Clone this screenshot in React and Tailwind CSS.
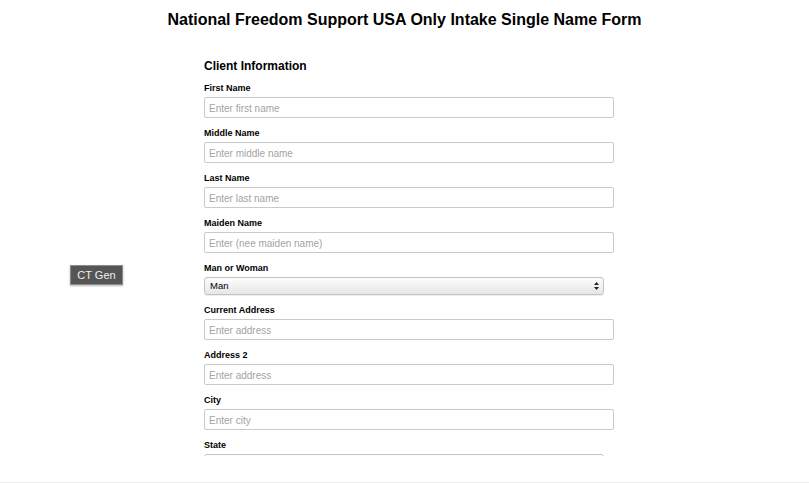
import React from "react";

const fields = [
  { label: "First Name", ph: "Enter first name" },
  { label: "Middle Name", ph: "Enter middle name" },
  { label: "Last Name", ph: "Enter last name" },
  { label: "Maiden Name", ph: "Enter (nee maiden name)" },
  { label: "Man or Woman", select: "Man" },
  { label: "Current Address", ph: "Enter address" },
  { label: "Address 2", ph: "Enter address" },
  { label: "City", ph: "Enter city" },
  { label: "State", select: "" },
];

function Arrows() {
  return (
    <svg width="5" height="8" viewBox="0 0 5 8" className="shrink-0">
      <path d="M2.5 0 L5 3 L0 3 Z" fill="#222" />
      <path d="M2.5 8 L5 5 L0 5 Z" fill="#222" />
    </svg>
  );
}

export default function App() {
  return (
    <div className="relative flex flex-col w-[809px] h-[483px] bg-white overflow-hidden" style={{ fontFamily: '"Liberation Sans", Arial, sans-serif' }}>
      <h1 className="pt-[10px] text-center text-[16px] leading-[20px] font-bold text-black">
        National Freedom Support USA Only Intake Single Name Form
      </h1>
      <div className="h-[406px] mt-[20px] overflow-hidden flex justify-start pl-[204px]">
        <div className="w-[410px] pt-[9px] flex flex-col gap-[10px]">
          <h2 className="text-[12px] leading-[14px] font-bold text-black">Client Information</h2>
          {fields.map((f) => (
            <div key={f.label} className="flex flex-col gap-[3px]">
              <div className="text-[9px] leading-[11px] font-bold text-black">{f.label}</div>
              {f.select !== undefined ? (
                <div className="flex items-center justify-between w-[400px] h-[18px] rounded-[3px] border border-[#c4c4c4] bg-gradient-to-b from-[#fdfdfd] to-[#e6e6e6] shadow-[0_1px_1px_rgba(0,0,0,0.08)] pl-[5px] pr-[4px] text-[9.5px] text-black">
                  <span>{f.select}</span>
                  <Arrows />
                </div>
              ) : (
                <div className="flex items-center w-[410px] h-[21px] rounded-[2px] border border-[#cacaca] bg-white pl-[4px] pt-[1px] text-[10px] text-[#a3a3a3]">
                  {f.ph}
                </div>
              )}
            </div>
          ))}
        </div>
      </div>
      <div className="mt-auto h-[1px] bg-[#ececec]" />
      <button className="absolute left-[70px] top-[265px] w-[53px] h-[20px] bg-[#555555] border border-[#8c8c8c] shadow-[0_1px_2px_rgba(0,0,0,0.3)] text-[11px] leading-[18px] text-[#eeeeee] text-center">
        CT Gen
      </button>
    </div>
  );
}
